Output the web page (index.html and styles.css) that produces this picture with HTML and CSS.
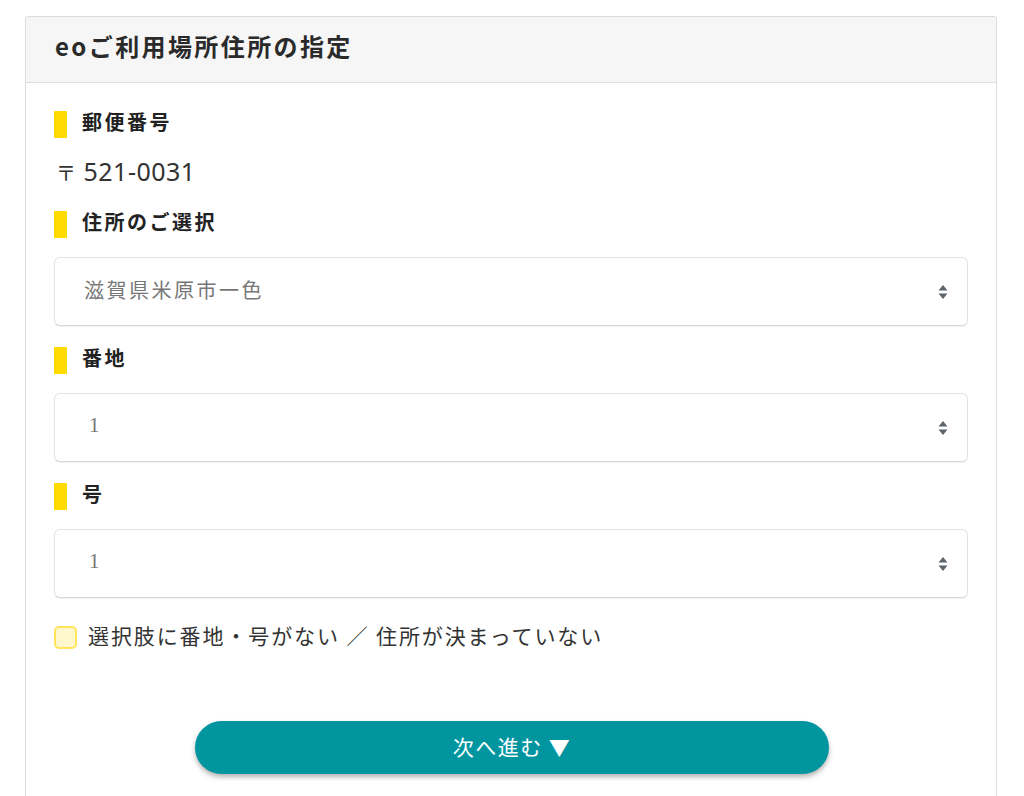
FILE: index.html
```html
<!DOCTYPE html>
<html lang="ja">
<head>
<meta charset="utf-8">
<link rel="stylesheet" href="styles.css">
</head>
<body>
<div class="card">
  <div class="card-head">eoご利用場所住所の指定</div>
  <div class="card-body">
    <div class="label"><span class="bar"></span><span class="txt">郵便番号</span></div>
    <div class="postal"><span class="mark">〒</span> 521-0031</div>

    <div class="label gap-l"><span class="bar"></span><span class="txt">住所のご選択</span></div>
    <div class="select"><span class="jp">滋賀県米原市一色</span>
      <svg class="arrows" width="10" height="16" viewBox="0 0 10 16"><path d="M5 1 L9.5 6.5 H0.5 Z M5 15 L9.5 9.5 H0.5 Z" fill="#5d646b"/></svg>
    </div>

    <div class="label gap-s"><span class="bar"></span><span class="txt">番地</span></div>
    <div class="select"><span class="num">1</span>
      <svg class="arrows" width="10" height="16" viewBox="0 0 10 16"><path d="M5 1 L9.5 6.5 H0.5 Z M5 15 L9.5 9.5 H0.5 Z" fill="#5d646b"/></svg>
    </div>

    <div class="label gap-s"><span class="bar"></span><span class="txt">号</span></div>
    <div class="select"><span class="num">1</span>
      <svg class="arrows" width="10" height="16" viewBox="0 0 10 16"><path d="M5 1 L9.5 6.5 H0.5 Z M5 15 L9.5 9.5 H0.5 Z" fill="#5d646b"/></svg>
    </div>

    <label class="check"><span class="box"></span><span class="txt">選択肢に番地・号がない ／ 住所が決まっていない</span></label>

    <div class="btn-row"><button class="btn">次へ進む ▼</button></div>
  </div>
</div>
</body>
</html>
```
FILE: styles.css
```css
* { box-sizing: border-box; }
html, body { margin: 0; padding: 0; background: #fff; }
body {
  font-family: "Noto Sans CJK JP", "Noto Sans", sans-serif;
  color: #333;
  padding: 16px 27px 0 25px;
}
.card {
  border: 1px solid #dcdcdc;
  border-bottom: none;
  border-radius: 4px 4px 0 0;
  height: 800px;
}
.card-head {
  background: #f6f6f6;
  border-bottom: 1px solid #dedede;
  height: 66px;
  padding-left: 29px;
  padding-bottom: 8px;
  display: flex;
  align-items: center;
  font-size: 24px;
  letter-spacing: 2.4px;
  font-weight: bold;
  color: #2a2a2a;
  border-radius: 4px 4px 0 0;
}
.card-body {
  padding: 28px 28px 0 28px;
}
.label {
  display: flex;
  align-items: center;
  height: 27px;
  line-height: 1;
  font-size: 20px;
  letter-spacing: 2.5px;
  font-weight: bold;
  color: #222;
}
.label .txt { margin-bottom: 5px; }
.bar {
  width: 13px;
  height: 27px;
  background: #ffdb00;
  margin-right: 15px;
}
.postal {
  margin-top: 18px;
  height: 30px;
  line-height: 30px;
  font-size: 25px;
  letter-spacing: 0.5px;
  font-family: "Noto Sans", "Noto Sans CJK JP", sans-serif;
  color: #333;
  padding-left: 2px;
}
.postal .mark {
  font-size: 20px;
  font-family: "Noto Sans CJK JP", sans-serif;
}
.gap-l { margin-top: 25px; }
.gap-s { margin-top: 21px; }
.select {
  margin-top: 19px;
  height: 69px;
  border: 1px solid #e3e3e3;
  border-bottom-color: #d8d8d8;
  border-radius: 6px;
  box-shadow: 0 1px 1px rgba(0,0,0,0.06);
  display: flex;
  align-items: center;
  justify-content: space-between;
  padding: 0 19px 0 29px;
  color: #777;
  font-size: 20px;
  letter-spacing: 2.5px;
}
.select .jp { margin-top: -4px; }
.select .num {
  font-family: "Liberation Serif", serif;
  font-size: 21px;
  letter-spacing: 0;
  padding-left: 5px;
  margin-top: -4px;
  color: #777;
}
.check {
  margin-top: 28px;
  display: flex;
  align-items: center;
  font-size: 21px;
  letter-spacing: 1.9px;
  color: #333;
  height: 23px;
}
.check .txt { margin-bottom: 5px; white-space: nowrap; }
.box {
  width: 23px;
  height: 23px;
  border: 2px solid #ffe45c;
  background: #fff8cc;
  border-radius: 5px;
  margin-right: 11px;
  flex: none;
}
.btn-row {
  margin-top: 72px;
  display: flex;
  justify-content: center;
  padding-left: 2px;
}
.btn {
  width: 634px;
  height: 53px;
  border: none;
  border-radius: 27px;
  background: #00959f;
  color: #fff;
  font-family: "Noto Sans CJK JP", sans-serif;
  font-size: 21px;
  letter-spacing: 1.5px;
  padding: 0 0 4px 0;
  box-shadow: 0 3px 5px rgba(0,0,0,0.3);
}
```
